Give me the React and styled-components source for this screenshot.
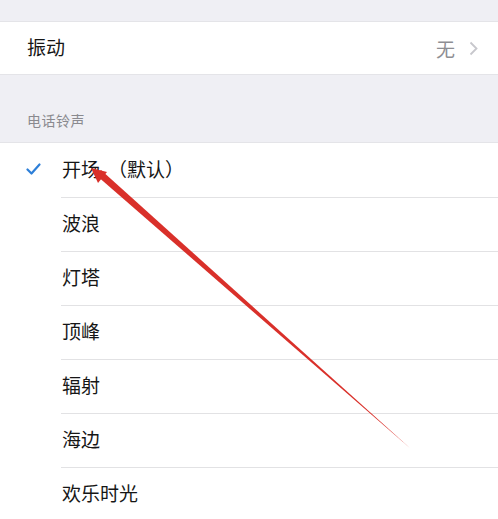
import React from "react"
import styled, { createGlobalStyle } from "styled-components"

const GlobalStyle = createGlobalStyle`
  html, body {
    margin: 0;
    padding: 0;
    background: #efeff4;
  }
  body {
    font-family: "Noto Sans CJK SC", "Liberation Sans", sans-serif;
    -webkit-font-smoothing: antialiased;
  }
`

const Page = styled.div`
  position: relative;
  width: 498px;
  height: 519px;
  overflow: hidden;
  background: #efeff4;
  padding-top: 21px;
  box-sizing: border-box;
`

const Group = styled.div`
  background: #fff;
  border-top: 1px solid #e4e4e8;
  border-bottom: 1px solid #e4e4e8;
`

const Row = styled.div`
  display: flex;
  align-items: center;
  height: ${p => (p.$indent ? "54px" : "52px")};
  padding-left: ${p => (p.$indent ? "62px" : "27px")};
  padding-right: 20px;
  box-sizing: border-box;
  position: relative;
  font-size: 19px;
  color: #161616;

  & + &::before {
    content: "";
    position: absolute;
    top: 0;
    left: 61px;
    right: 0;
    height: 1px;
    background: #e2e2e4;
  }
`

const Label = styled.span`
  flex: 1;
  line-height: 1;
  margin-top: -3px;
`

const Note = styled.span`
  margin-left: 8px;
`

const Value = styled.span`
  color: #8e8e93;
  font-size: 19px;
  margin-right: 14px;
`

const Chevron = styled.svg`
  width: 9px;
  height: 15px;
`

const SectionTitle = styled.div`
  height: 67px;
  display: flex;
  align-items: flex-end;
  padding: 0 0 12px 27px;
  box-sizing: border-box;
  font-size: 14px;
  color: #8a8a8f;
  letter-spacing: 0.5px;
`

const Check = styled.svg`
  position: absolute;
  left: 26px;
  top: 50%;
  width: 15px;
  height: 12px;
  margin-top: -7px;
`

const Arrow = styled.svg`
  position: absolute;
  left: 0;
  top: 0;
  pointer-events: none;
`

const tones = [
  { name: "开场", note: "（默认）", selected: true },
  { name: "波浪" },
  { name: "灯塔" },
  { name: "顶峰" },
  { name: "辐射" },
  { name: "海边" },
  { name: "欢乐时光" },
]

export default function App() {
  return (
    <>
      <GlobalStyle />
      <Page>
        <Group>
          <Row>
            <Label>振动</Label>
            <Value>无</Value>
            <Chevron viewBox="0 0 9 15">
              <path d="M1.5 1.5 L7.5 7.5 L1.5 13.5" fill="none" stroke="#c7c7cc" strokeWidth="1.8" />
            </Chevron>
          </Row>
        </Group>
        <SectionTitle>电话铃声</SectionTitle>
        <Group>
          {tones.map(t => (
            <Row key={t.name} $indent>
              {t.selected && (
                <Check viewBox="0 0 15 12">
                  <path d="M1.5 6.5 L5.5 10.5 L13.5 1.5" fill="none" stroke="#2d7fd8" strokeWidth="2.2" strokeLinecap="round" strokeLinejoin="round" />
                </Check>
              )}
              <Label>
                {t.name}
                {t.note && <Note>{t.note}</Note>}
              </Label>
            </Row>
          ))}
        </Group>
        <Arrow width="498" height="519" viewBox="0 0 498 519">
          <polygon points="96,175 101,170 411,449" fill="#d9302a" />
          <polygon points="91,168 107,172 98,183" fill="#d9302a" />
        </Arrow>
      </Page>
    </>
  )
}
